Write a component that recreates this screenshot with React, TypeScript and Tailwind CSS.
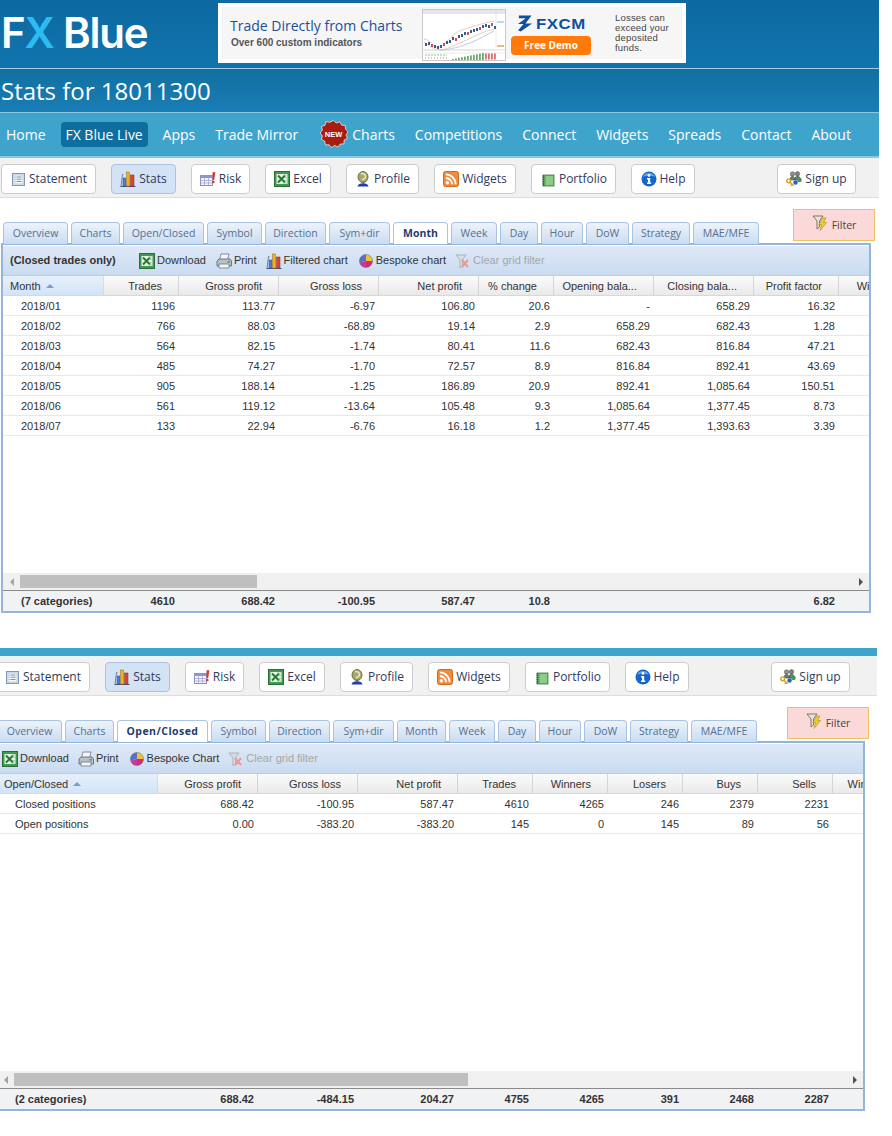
import React from 'react';

type IconName = 'statement' | 'stats' | 'risk' | 'excel' | 'profile' | 'rss' | 'portfolio' | 'help' | 'signup' | 'print' | 'pie' | 'clear' | 'filter';

const Icon = ({ name, className = 'w-4 h-4' }: { name: IconName; className?: string }) => {
  const common = { className: `${className} shrink-0`, viewBox: '0 0 16 16' };
  switch (name) {
    case 'statement':
      return (
        <svg {...common}>
          <rect x="2.5" y="2.5" width="12" height="12" fill="#dfe8f4" stroke="#7f97b8" />
          <rect x="4" y="4" width="9" height="9" fill="#f6f9fd" stroke="#9fb2cc" strokeWidth="0.6" />
          <path d="M6.5 6h5M6.5 8.2h5M6.5 10.5h5M4.8 6h.8M4.8 8.2h.8M4.8 10.5h.8" stroke="#5d7595" strokeWidth="0.8" />
        </svg>
      );
    case 'stats':
      return (
        <svg {...common}>
          <path d="M0.5 15.5h15" stroke="#4c5180" strokeWidth="1" />
          <path d="M1 15.5L2.5 3.5h1" stroke="#6c7296" strokeWidth="0.9" fill="none" />
          <rect x="3" y="7" width="3" height="8" fill="#4d7fd0" stroke="#33518a" strokeWidth="0.5" />
          <rect x="6.5" y="1" width="3" height="14" fill="#f0b020" stroke="#96701a" strokeWidth="0.5" />
          <rect x="10.5" y="4" width="3.5" height="11" fill="#d8482c" stroke="#8c2c1c" strokeWidth="0.5" />
        </svg>
      );
    case 'risk':
      return (
        <svg {...common}>
          <rect x="0.5" y="4.5" width="12" height="10" fill="#f4f4fa" stroke="#8a8fc0" />
          <rect x="0.5" y="4.5" width="12" height="2.5" fill="#8f95cf" />
          <path d="M4.5 7v7.5M8.5 7v7.5M.5 9.5h12M.5 12h12" stroke="#9a9fcc" strokeWidth="0.7" />
          <path d="M12.5 1.2h2.8L14.2 9h-1.4z" fill="#e0301e" />
          <circle cx="13.3" cy="11" r="1.3" fill="#e0301e" />
        </svg>
      );
    case 'excel':
      return (
        <svg {...common}>
          <rect x="0.5" y="0.5" width="15" height="15" fill="#3f9b4f" stroke="#2a6d38" />
          <rect x="2.5" y="3" width="11" height="10" fill="#e9f3e4" />
          <path d="M4 4.5l7 7M11 4.5l-7 7" stroke="#1f7a35" strokeWidth="2" />
          <path d="M9 4h4M10 6.5h3M10 9.5h3M9 12h4" stroke="#8cbf92" strokeWidth="0.7" />
        </svg>
      );
    case 'profile':
      return (
        <svg {...common}>
          <ellipse cx="8" cy="6" rx="5" ry="5.5" fill="#a8a86a" stroke="#5b5d33" strokeWidth="0.8" />
          <path d="M6 2.5c3 0 5 1 4.5 3.5S7.5 7 7.5 9.5" stroke="#e8e8cc" strokeWidth="1.4" fill="none" />
          <path d="M7.5 10.5h1.5v2H7.5z" fill="#6b6b3d" />
          <path d="M2.5 15.5c.4-2.5 2.5-3.3 5.5-3.3s5.1.8 5.5 3.3z" fill="#1f3fb5" />
        </svg>
      );
    case 'rss':
      return (
        <svg {...common}>
          <rect x="0.5" y="0.5" width="15" height="15" rx="2" fill="#f08a3c" stroke="#d06a20" />
          <circle cx="4.3" cy="11.7" r="1.7" fill="#fff" />
          <path d="M2.8 7a6.2 6.2 0 0 1 6.2 6.2M2.8 3.4a9.8 9.8 0 0 1 9.8 9.8" stroke="#fff" strokeWidth="1.8" fill="none" />
        </svg>
      );
    case 'portfolio':
      return (
        <svg {...common}>
          <rect x="3" y="4" width="11" height="11" fill="#6cb56c" stroke="#3c7a45" strokeWidth="0.8" />
          <path d="M3.5 4.5v10" stroke="#2d4a32" strokeWidth="1.6" strokeDasharray="1 0.8" />
          <rect x="6" y="5" width="7" height="9" fill="#8fcb88" />
        </svg>
      );
    case 'help':
      return (
        <svg {...common}>
          <circle cx="8" cy="8" r="7.5" fill="#1566c8" />
          <path d="M2 6a6.5 6.5 0 0 1 12 0c-3-2-9-2-12 0z" fill="#6ba6ea" />
          <circle cx="8" cy="4.4" r="1.4" fill="#fff" />
          <path d="M6 7h3.2v4.6h1V13H6v-1.4h1V8.4H6z" fill="#fff" />
        </svg>
      );
    case 'signup':
      return (
        <svg {...common}>
          <circle cx="6.5" cy="3" r="2.2" fill="#8d9490" stroke="#4c4c4c" strokeWidth="0.5" />
          <circle cx="11.5" cy="2.8" r="2.2" fill="#7c8480" stroke="#4c4c4c" strokeWidth="0.5" />
          <path d="M4 9c0-2.5 1-3.8 2.6-3.8S9 6.500 9 9zM9 9c0-3 1-3.900 2.500-3.900S14.500 6.300 14.500 9z" fill="#6f7a74" stroke="#3f4642" strokeWidth="0.5" />
          <circle cx="13.500" cy="9" r="2.300" fill="#3f9b55" />
          <circle cx="9.500" cy="11.500" r="2.200" fill="#2d5fb8" />
          <circle cx="2.600" cy="9.800" r="1.900" fill="none" stroke="#d2a21e" strokeWidth="1.400" />
          <path d="M4 11.200l3.600 3.600M6 13.500l-1.200 1.300" stroke="#d2a21e" strokeWidth="1.500" />
        </svg>
      );
    case 'print':
      return (
        <svg {...common}>
          <path d="M5 1h8l-1.500 6h-8z" fill="#f4f6f8" stroke="#6f7781" strokeWidth="0.8" />
          <path d="M1 8l2-2h11l1.500 2v5H1z" fill="#b9c0c9" stroke="#565e68" strokeWidth="0.8" />
          <path d="M3 11h10v4H3z" fill="#f1f3f5" stroke="#6f7781" strokeWidth="0.8" />
          <rect x="11.500" y="8" width="2.500" height="1.600" fill="#38b04a" />
        </svg>
      );
    case 'pie':
      return (
        <svg {...common}>
          <path d="M8 8V1.500A6.500 6.500 0 0 1 14.500 8z" fill="#f0c22c" />
          <path d="M8 8h6.500a6.500 6.500 0 0 1-6.500 6.500z" fill="#d6287a" />
          <path d="M8 8v6.500A6.500 6.500 0 0 1 1.700 9.600z" fill="#c23aa0" />
          <path d="M8 8L1.700 9.600A6.500 6.500 0 0 1 8 1.500z" fill="#5a6fc8" />
          <circle cx="8" cy="8" r="6.500" fill="none" stroke="#5f5f6f" strokeWidth="0.5" />
        </svg>
      );
    case 'clear':
      return (
        <svg {...common}>
          <path d="M1 2h10L7.500 7v6L5 15V7z" fill="#d8dce2" stroke="#a3a7ad" strokeWidth="0.8" />
          <path d="M7 7l6 7M13 7l-6 7" stroke="#ea9a94" strokeWidth="2" />
        </svg>
      );
    case 'filter':
      return (
        <svg {...common}>
          <path d="M1 1h10L7.500 6v6L5 14V6z" fill="#e8e4d8" stroke="#6d6a5e" strokeWidth="0.9" />
          <path d="M11 3L6.800 9.500h2.800L8 15.500 14.500 7.500h-3L14 3z" fill="#f2cf2e" stroke="#a8871a" strokeWidth="0.6" />
        </svg>
      );
  }
};

const NewBadge = () => (
  <svg className="w-[29px] h-[29px] shrink-0" viewBox="0 0 29 29">
    <polygon
      points="14.5,0.5 17.3,3 20.9,1.8 22.6,5.1 26.3,5.4 26.5,9.1 29,11.8 27.1,14.8 28.4,18.3 25.2,20.1 24.9,23.9 21.2,24.1 19,27.2 15.8,25.4 12.5,27.6 10.1,24.7 6.4,24.9 5.7,21.2 2.4,19.4 3.5,15.8 1,13 3.4,10.1 2.5,6.5 6,5.2 7,1.6 10.7,2.3"
      fill="#a81d12"
      stroke="#f3e3dc"
      strokeWidth="0.8"
    />
    <text x="14.5" y="17" textAnchor="middle" fontSize="7.5" fontWeight="700" fill="#fff" fontFamily="Liberation Sans, sans-serif">NEW</text>
  </svg>
);

const AdChart = () => {
  const candles = [
    [3, 34], [6, 33], [9, 35], [12, 36], [15, 37], [18, 36], [21, 34], [24, 32], [27, 31], [30, 28], [33, 29], [36, 26], [39, 25],
    [42, 23], [45, 23], [48, 21], [51, 20], [54, 19], [57, 18], [60, 16], [63, 15], [66, 16], [69, 14], [72, 17],
  ];
  const bars = [30, 33, 36, 39, 42, 45, 48, 51, 54, 57, 60];
  return (
    <svg className="w-[84px] h-[52px] mt-[2px] shrink-0 bg-white" viewBox="0 0 84 52">
      <rect x="0.5" y="0.5" width="83" height="51" fill="#fff" stroke="#c9c9c9" />
      <rect x="1" y="1" width="82" height="4" fill="#e6e6e6" />
      <path d="M2 30c6 0 8 8 14 8s14-14 24-17 18-6 32-9M2 33c6 4 10 8 16 8s12-4 20-7 18-10 34-14" stroke="#e3c2a6" fill="none" strokeWidth="0.8" />
      <path d="M18 41c10 0 22-4 30-7s16-8 24-12" stroke="#b7c4dc" fill="none" strokeWidth="0.9" />
      <path d="M2 41h70" stroke="#c8c8c8" strokeWidth="0.5" strokeDasharray="1 1" />
      <path d="M74 2v36" stroke="#d5d5d5" strokeWidth="0.5" />
      <path d="M75 13h7" stroke="#6bb7d6" strokeWidth="1" />
      <path d="M75 37h7" stroke="#e09020" strokeWidth="1.2" />
      {candles.map(([x, y], i) => (
        <rect key={i} x={x} y={y} width="2" height="3" fill={i % 4 === 2 ? '#c8505a' : '#3a5a96'} />
      ))}
      <path d="M1 41h82" stroke="#bbb" strokeWidth="0.5" />
      <path d="M1 44h82" stroke="#d5d5d5" strokeWidth="0.5" />
      <path d="M3 46h22" stroke="#8cc48c" strokeWidth="1" strokeDasharray="2 1" />
      <path d="M3 49h24" stroke="#d06060" strokeWidth="0.9" strokeDasharray="1 2" />
      {bars.map((x, i) => (
        <rect key={x} x={x} y={50 - i * 0.6} width="1.8" height={1 + i * 0.6} fill="#67ad67" />
      ))}
      {[63, 66, 69, 72].map((x) => (
        <rect key={x} x={x} y="44.5" width="1.8" height="6" fill="#dd6a6a" />
      ))}
    </svg>
  );
};

const Banner = () => (
  <div className="w-[468px] h-[60px] ml-[69px] mt-[3px] border-[4px] border-white bg-[#f6f6f6] flex items-start shrink-0">
    <div className="w-[200px] pl-2 pt-[8px]">
      <div className="font-['Open_Sans',sans-serif] text-[14px] leading-[22px] text-[#1d4f96] whitespace-nowrap">Trade Directly from Charts</div>
      <div className="pl-[1px] mt-[1px] font-['Liberation_Sans',sans-serif] text-[10px] font-bold leading-[10px] text-[#555] whitespace-nowrap">Over 600 custom indicators</div>
    </div>
    <AdChart />
    <div className="w-[80px] ml-[5px] mt-[6px] flex flex-col items-center">
      <div className="flex items-center gap-[3px] h-[21px] pl-[6px] w-full">
        <svg className="w-[16px] h-[19px] shrink-0" viewBox="0 0 17 19">
          <path d="M2 1h13.5L9 9.5h7L4 18c-2-1-3-1-3-1l6-7H1c3-2 6-4 8-6H2z" fill="#0f4f9c" />
        </svg>
        <span className="font-['Liberation_Sans',sans-serif] font-bold text-[15px] leading-[18px] text-[#0f4f9c] tracking-[0.5px] scale-x-[1.12] origin-left w-[52px]">FXCM</span>
      </div>
      <div className="w-[80px] h-[19px] mt-[2px] rounded-[4px] bg-[#ff7a0a] text-white text-[10px] font-bold leading-[19px] text-center font-['Open_Sans',sans-serif]">Free Demo</div>
    </div>
    <div className="ml-6 mt-[6px] w-[66px] font-['Liberation_Sans',sans-serif] text-[9.5px] leading-[10px] tracking-[0.2px] text-[#444]">
      Losses can exceed your deposited funds.
    </div>
  </div>
);

const navItems = ['Competitions', 'Connect', 'Widgets', 'Spreads', 'Contact', 'About'];

const TopHeader = () => (
  <>
    <div className="h-[68px] bg-gradient-to-b from-[#0d69a1] to-[#1274ad] flex items-start">
      <div className="w-[149px] pl-[1px] pt-[5px] font-['Inter',sans-serif] font-semibold text-[42px] leading-[56px] tracking-[-1.2px] text-white whitespace-nowrap">
        F<span className="text-[#2bbcf3]">X</span> Blue
      </div>
      <Banner />
    </div>
    <div className="h-[44px] border-t border-[#a2cbe4] bg-gradient-to-b from-[#11709f] to-[#197db6] pl-[1px] font-['Open_Sans',sans-serif] text-[24px] leading-[43px] text-white">
      Stats for 18011300
    </div>
    <div className="h-[46px] border-t border-[#8ec7e2] border-b-2 border-b-[#8fc7ea] bg-[#3fa4cb] flex items-center pl-[6px] font-['Open_Sans',sans-serif] text-[14px] text-white whitespace-nowrap">
      <span>Home</span>
      <span className="ml-[15px] w-[87px] text-center h-[25px] leading-[25px] rounded-[4px] bg-[#0e6e9e]">FX Blue Live</span>
      <span className="ml-[15px]">Apps</span>
      <span className="ml-[20px]">Trade Mirror</span>
      <span className="ml-[21px] mr-[4px]"><NewBadge /></span>
      <span>Charts</span>
      <div className="flex gap-[20px] ml-[20px]">
        {navItems.map((n) => (
          <span key={n}>{n}</span>
        ))}
      </div>
    </div>
  </>
);

const buttons: { label: string; icon: IconName; width: string; active?: boolean }[] = [
  { label: 'Statement', icon: 'statement', width: 'w-[95px]' },
  { label: 'Stats', icon: 'stats', width: 'w-[65px]', active: true },
  { label: 'Risk', icon: 'risk', width: 'w-[59px]' },
  { label: 'Excel', icon: 'excel', width: 'w-[66px]' },
  { label: 'Profile', icon: 'profile', width: 'w-[73px]' },
  { label: 'Widgets', icon: 'rss', width: 'w-[82px]' },
  { label: 'Portfolio', icon: 'portfolio', width: 'w-[85px]' },
  { label: 'Help', icon: 'help', width: 'w-[64px]' },
];

const ToolButton = ({ label, icon, width, active }: { label: string; icon: IconName; width: string; active?: boolean }) => (
  <div
    className={`${width} h-[30px] rounded-[4px] border flex items-center justify-center gap-[3px] font-['Open_Sans',sans-serif] text-[12px] text-[#2f3a5e] ${
      active ? 'bg-[#d3e2f4] border-[#a9c3e2]' : 'bg-white border-[#cccccc]'
    }`}
  >
    <Icon name={icon} />
    <span>{label}</span>
  </div>
);

const ButtonBar = () => (
  <div className="h-[40px] bg-[#f1f1f1] border-t border-[#e8f3f8] border-b border-b-[#dddddd] flex pl-[1px] pt-[5px] whitespace-nowrap">
    <div className="flex gap-[15px]">
      {buttons.map((b) => (
        <ToolButton key={b.label} {...b} />
      ))}
    </div>
    <div className="ml-[82px]">
      <ToolButton label="Sign up" icon="signup" width="w-[79px]" />
    </div>
  </div>
);

const tabDefs: { label: string; width: string; activeWidth: string; gap: string }[] = [
  { label: 'Overview', width: 'w-[65px]', activeWidth: 'w-[65px]', gap: 'mr-[3px]' },
  { label: 'Charts', width: 'w-[49px]', activeWidth: 'w-[49px]', gap: 'mr-[3px]' },
  { label: 'Open/Closed', width: 'w-[81px]', activeWidth: 'w-[91px]', gap: 'mr-[3px]' },
  { label: 'Symbol', width: 'w-[55px]', activeWidth: 'w-[55px]', gap: 'mr-[3px]' },
  { label: 'Direction', width: 'w-[61px]', activeWidth: 'w-[61px]', gap: 'mr-[3px]' },
  { label: 'Sym+dir', width: 'w-[61px]', activeWidth: 'w-[61px]', gap: 'mr-[3px]' },
  { label: 'Month', width: 'w-[49px]', activeWidth: 'w-[55px]', gap: 'mr-[3px]' },
  { label: 'Week', width: 'w-[46px]', activeWidth: 'w-[46px]', gap: 'mr-[3px]' },
  { label: 'Day', width: 'w-[38px]', activeWidth: 'w-[38px]', gap: 'mr-[3px]' },
  { label: 'Hour', width: 'w-[42px]', activeWidth: 'w-[42px]', gap: 'mr-[3px]' },
  { label: 'DoW', width: 'w-[43px]', activeWidth: 'w-[43px]', gap: 'mr-[3px]' },
  { label: 'Strategy', width: 'w-[58px]', activeWidth: 'w-[58px]', gap: 'mr-[3px]' },
  { label: 'MAE/MFE', width: 'w-[66px]', activeWidth: 'w-[66px]', gap: 'mr-0' },
];

const TabRow = ({ active }: { active: string }) => (
  <div className="h-[34px] mt-[11px] flex items-end justify-between pl-[3px] pr-[4px] whitespace-nowrap">
    <div className="flex items-end -mb-[1px] relative">
      {tabDefs.map((t) => {
        const on = t.label === active;
        return (
          <div
            key={t.label}
            className={`${on ? t.activeWidth : t.width} ${t.gap} h-[22px] rounded-t-[4px] border border-b-0 border-[#a9c4e2] text-center font-['Open_Sans',sans-serif] text-[10.5px] leading-[21px] ${
              on ? 'bg-white font-bold text-[#1f3c70]' : 'bg-gradient-to-b from-[#edf3fb] to-[#c9dcf2] text-[#56708f]'
            } ${on && t.label === 'Open/Closed' ? 'tracking-[0.45px]' : ''}`}
          >
            {t.label}
          </div>
        );
      })}
    </div>
    <div className="w-[82px] h-[32px] mb-[2px] bg-[#fbd9d9] border border-[#f1bf63] flex items-center justify-center gap-[4px] font-['Open_Sans',sans-serif] text-[10.5px] text-[#444]">
      <Icon name="filter" className="w-[16px] h-[16px] -mt-[4px]" />
      <span className="mt-[1px]">Filter</span>
    </div>
  </div>
);

type Col = { label: string; width: string; sort?: boolean };

const monthCols: Col[] = [
  { label: 'Month', width: 'w-[101px]', sort: true },
  { label: 'Trades', width: 'w-[75px]' },
  { label: 'Gross profit', width: 'w-[100px]' },
  { label: 'Gross loss', width: 'w-[100px]' },
  { label: 'Net profit', width: 'w-[100px]' },
  { label: '% change', width: 'w-[75px]' },
  { label: 'Opening bala...', width: 'w-[100px]' },
  { label: 'Closing bala...', width: 'w-[100px]' },
  { label: 'Profit factor', width: 'w-[85px]' },
  { label: 'Winners', width: 'w-[75px]' },
];

const monthRows = [
  ['2018/01', '1196', '113.77', '-6.97', '106.80', '20.6', '-', '658.29', '16.32', ''],
  ['2018/02', '766', '88.03', '-68.89', '19.14', '2.9', '658.29', '682.43', '1.28', ''],
  ['2018/03', '564', '82.15', '-1.74', '80.41', '11.6', '682.43', '816.84', '47.21', ''],
  ['2018/04', '485', '74.27', '-1.70', '72.57', '8.9', '816.84', '892.41', '43.69', ''],
  ['2018/05', '905', '188.14', '-1.25', '186.89', '20.9', '892.41', '1,085.64', '150.51', ''],
  ['2018/06', '561', '119.12', '-13.64', '105.48', '9.3', '1,085.64', '1,377.45', '8.73', ''],
  ['2018/07', '133', '22.94', '-6.76', '16.18', '1.2', '1,377.45', '1,393.63', '3.39', ''],
];

const openCols: Col[] = [
  { label: 'Open/Closed', width: 'w-[161px]', sort: true },
  { label: 'Gross profit', width: 'w-[100px]' },
  { label: 'Gross loss', width: 'w-[100px]' },
  { label: 'Net profit', width: 'w-[100px]' },
  { label: 'Trades', width: 'w-[75px]' },
  { label: 'Winners', width: 'w-[75px]' },
  { label: 'Losers', width: 'w-[75px]' },
  { label: 'Buys', width: 'w-[75px]' },
  { label: 'Sells', width: 'w-[75px]' },
  { label: 'Win ratio', width: 'w-[75px]' },
];

const openRows = [
  ['Closed positions', '688.42', '-100.95', '587.47', '4610', '4265', '246', '2379', '2231', ''],
  ['Open positions', '0.00', '-383.20', '-383.20', '145', '0', '145', '89', '56', ''],
];

type ToolItem = { label: string; icon: IconName; disabled?: boolean; gap: string };

const GridTools = ({ title, items }: { title?: string; items: ToolItem[] }) => (
  <div className={`h-[30px] mt-[1px] bg-gradient-to-b from-[#dfe9f7] to-[#c9dbf1] border-b border-[#b9cde6] flex items-center whitespace-nowrap shrink-0 ${title ? '' : 'pl-[5px]'}`}>
    {title && <span className="ml-[7px] mr-[23px] w-[106px] font-bold">{title}</span>}
    {items.map((it) => (
      <span key={it.label} className={`flex items-center gap-[2px] ${it.gap} ${it.disabled ? 'text-[#a6a6a6]' : ''}`}>
        <Icon name={it.icon} />
        {it.label}
      </span>
    ))}
  </div>
);

const HeadRow = ({ cols }: { cols: Col[] }) => (
  <div className="flex h-[20px] border-b border-[#d8d8d8] shrink-0">
    {cols.map((c) =>
      c.sort ? (
        <div key={c.label} className={`${c.width} shrink-0 pl-[7px] leading-[20px] border-r border-[#d0dcec] bg-gradient-to-b from-[#e6f0fb] to-[#d3e4f8]`}>
          {c.label}
          <span className="ml-[5px] inline-block w-0 h-0 align-[2px] border-x-[4px] border-x-transparent border-b-[4px] border-b-[#7f9cc4]" />
        </div>
      ) : (
        <div key={c.label} className={`${c.width} shrink-0 text-right pr-[16px] leading-[20px] border-r border-[#d4d4d4] bg-gradient-to-b from-[#fbfbfb] to-[#e9e9e9] whitespace-nowrap overflow-hidden`}>
          {c.label}
        </div>
      ),
    )}
  </div>
);

const DataRow = ({ cols, cells, bold, indent }: { cols: Col[]; cells: string[]; bold?: boolean; indent: string }) => (
  <div className={`flex h-[20px] leading-[20px] shrink-0 ${bold ? 'font-bold' : 'border-b border-[#e8e8e8]'}`}>
    {cols.map((c, i) => (
      <div key={c.label} className={`${c.width} shrink-0 ${i === 0 ? indent : 'text-right pr-[4px]'}`}>
        {cells[i]}
      </div>
    ))}
  </div>
);

const ScrollBar = ({ thumb }: { thumb: string }) => (
  <div className="h-[17px] bg-[#f0f0f0] flex items-center shrink-0">
    <span className="ml-[7px] w-0 h-0 border-y-[4px] border-y-transparent border-r-[4px] border-r-[#a3a3a3]" />
    <div className={`h-[13px] bg-[#bfbfbf] ml-[6px] ${thumb}`} />
    <span className="ml-auto mr-[6px] w-0 h-0 border-y-[4px] border-y-transparent border-l-[4px] border-l-[#505050]" />
  </div>
);

const Grid = ({
  title,
  tools,
  cols,
  rows,
  foot,
  thumb,
}: {
  title?: string;
  tools: ToolItem[];
  cols: Col[];
  rows: string[][];
  foot: string[];
  thumb: string;
}) => (
  <div className="w-[870px] h-[370px] ml-[1px] border-2 border-[#94b4d9] flex flex-col overflow-hidden font-['Liberation_Sans',sans-serif] text-[11px] text-[#333] bg-white">
    <GridTools title={title} items={tools} />
    <div className="flex-1 min-h-0 overflow-hidden flex flex-col w-[1100px]">
      <HeadRow cols={cols} />
      {rows.map((r) => (
        <DataRow key={r[0]} cols={cols} cells={r} indent="pl-[18px]" />
      ))}
    </div>
    <ScrollBar thumb={thumb} />
    <div className="h-[21px] border-t border-[#8a8a8a] bg-[#f1f2f4] overflow-hidden shrink-0 w-[1100px]">
      <DataRow cols={cols} cells={foot} bold indent="pl-[18px]" />
    </div>
  </div>
);

const monthTools: ToolItem[] = [
  { label: 'Download', icon: 'excel', gap: 'mr-[10px]' },
  { label: 'Print', icon: 'print', gap: 'mr-[9px]' },
  { label: 'Filtered chart', icon: 'stats', gap: 'mr-[10px]' },
  { label: 'Bespoke chart', icon: 'pie', gap: 'mr-[9px]' },
  { label: 'Clear grid filter', icon: 'clear', disabled: true, gap: '' },
];

const openTools: ToolItem[] = [
  { label: 'Download', icon: 'excel', gap: 'mr-[9px]' },
  { label: 'Print', icon: 'print', gap: 'mr-[10px]' },
  { label: 'Bespoke Chart', icon: 'pie', gap: 'mr-[9px]' },
  { label: 'Clear grid filter', icon: 'clear', disabled: true, gap: '' },
];

export default function App() {
  return (
    <div className="w-[892px] h-[1136px] bg-white overflow-hidden">
      <div className="w-[879px]">
        <TopHeader />
        <ButtonBar />
        <TabRow active="Month" />
        <Grid
          title="(Closed trades only)"
          tools={monthTools}
          cols={monthCols}
          rows={monthRows}
          foot={['(7 categories)', '4610', '688.42', '-100.95', '587.47', '10.8', '', '', '6.82', '']}
          thumb="w-[237px]"
        />
      </div>
      <div className="w-[883px] -ml-[6px] mt-[35px]">
        <div className="h-[8px] bg-[#3fa4cb]" />
        <ButtonBar />
        <div className="w-[879px]">
          <TabRow active="Open/Closed" />
          <Grid
            tools={openTools}
            cols={openCols}
            rows={openRows}
            foot={['(2 categories)', '688.42', '-484.15', '204.27', '4755', '4265', '391', '2468', '2287', '']}
            thumb="w-[454px]"
          />
        </div>
      </div>
    </div>
  );
}
